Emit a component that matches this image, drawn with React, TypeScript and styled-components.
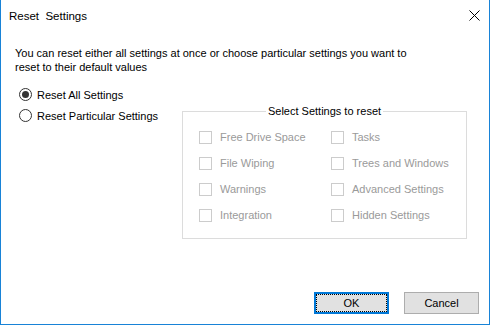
import React from "react";
import styled, { createGlobalStyle, css } from "styled-components";

const GlobalStyle = createGlobalStyle`
  html, body { margin: 0; padding: 0; background: #fff; }
  * { box-sizing: border-box; }
`;

const FONT = `"Liberation Sans", Arial, sans-serif`;

const Window = styled.div`
  width: 490px;
  height: 325px;
  background: #fff;
  border: 1px solid #1883d7;
  border-top: none;
  display: flex;
  flex-direction: column;
  font-family: ${FONT};
  font-size: 11px;
  color: #000;
`;

const TitleBar = styled.div`
  height: 31px;
  display: flex;
  align-items: center;
  padding-left: 8px;
`;

const Title = styled.span`
  white-space: pre;
  font-size: 11.5px;
`;

const CloseButton = styled.div`
  margin-left: auto;
  width: 30px;
  height: 31px;
  display: flex;
  align-items: center;
  justify-content: center;
`;

const Main = styled.div`
  flex: 1;
  display: flex;
  flex-direction: column;
  padding: 0 10px 10px 14px;
`;

const Description = styled.p`
  margin: 15px 0 0;
  line-height: 14px;
  width: 400px;
`;

const OptionsRow = styled.div`
  display: grid;
  grid-template-columns: 167px 285px;
  margin-top: 10px;
`;

const RadioGroup = styled.div`
  display: flex;
  flex-direction: column;
  padding-left: 4px;
`;

const RadioRow = styled.label`
  height: 21px;
  display: flex;
  align-items: center;
  gap: 5px;
  white-space: nowrap;
`;

const RadioCircle = styled.span<{ $checked?: boolean }>`
  width: 13px;
  height: 13px;
  border-radius: 50%;
  border: 1px solid #333;
  background: #fff;
  display: flex;
  align-items: center;
  justify-content: center;
  flex: none;
  ${(p) =>
    p.$checked &&
    css`
      &::after {
        content: "";
        width: 7px;
        height: 7px;
        border-radius: 50%;
        background: #333;
      }
    `}
`;

const GroupBox = styled.fieldset`
  margin: 20px 0 0;
  padding: 6px 16px 10px;
  border: 1px solid #dcdcdc;
  min-width: 0;
  align-self: start;
`;

const Legend = styled.legend`
  margin: 0 auto;
  padding: 0 2px;
  line-height: 14px;
  color: #000;
`;

const CheckGrid = styled.div`
  display: grid;
  grid-template-columns: 132px 1fr;
  grid-template-rows: repeat(4, 26px);
  grid-auto-flow: column;
`;

const CheckItem = styled.label`
  display: flex;
  align-items: center;
  gap: 8px;
  color: #9a9a9a;
  white-space: nowrap;
`;

const CheckBox = styled.span`
  width: 13px;
  height: 13px;
  border: 1px solid #cccccc;
  background: #fff;
  flex: none;
`;

const ButtonRow = styled.div`
  margin-top: auto;
  display: flex;
  justify-content: flex-end;
  gap: 15px;
`;

const Button = styled.button<{ $default?: boolean }>`
  width: 75px;
  height: 22px;
  padding: 0;
  font-family: ${FONT};
  font-size: 11px;
  color: #000;
  background: #e1e1e1;
  border: 1px solid #adadad;
  ${(p) =>
    p.$default &&
    css`
      border: 2px solid #0078d7;
      outline: 1px dotted #000;
      outline-offset: -3px;
    `}
`;

const CloseIcon = () => (
  <svg width="11" height="11" viewBox="0 0 11 11">
    <path d="M0.5 0.5 L10.5 10.5 M10.5 0.5 L0.5 10.5" stroke="#000" strokeWidth="1" fill="none" />
  </svg>
);

const left = ["Free Drive Space", "File Wiping", "Warnings", "Integration"];
const right = ["Tasks", "Trees and Windows", "Advanced Settings", "Hidden Settings"];

export default function App() {
  return (
    <>
      <GlobalStyle />
      <Window>
        <TitleBar>
          <Title>Reset  Settings</Title>
          <CloseButton>
            <CloseIcon />
          </CloseButton>
        </TitleBar>
        <Main>
          <Description>
            You can reset either all settings at once or choose particular settings you want to reset to their default values
          </Description>
          <OptionsRow>
            <RadioGroup>
              <RadioRow>
                <RadioCircle $checked />
                Reset All Settings
              </RadioRow>
              <RadioRow>
                <RadioCircle />
                Reset Particular Settings
              </RadioRow>
            </RadioGroup>
            <GroupBox>
              <Legend>Select Settings to reset</Legend>
              <CheckGrid>
                {[...left, ...right].map((t) => (
                  <CheckItem key={t}>
                    <CheckBox />
                    {t}
                  </CheckItem>
                ))}
              </CheckGrid>
            </GroupBox>
          </OptionsRow>
          <ButtonRow>
            <Button $default>OK</Button>
            <Button>Cancel</Button>
          </ButtonRow>
        </Main>
      </Window>
    </>
  );
}
